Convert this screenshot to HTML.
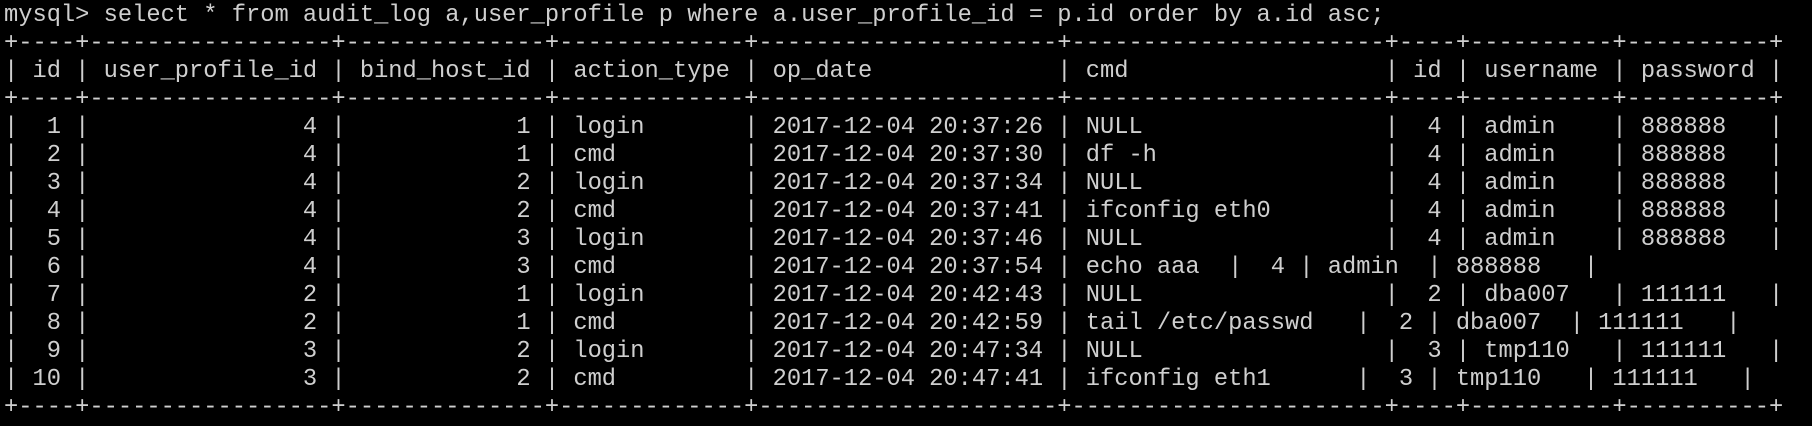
<!DOCTYPE html>
<html><head><meta charset="utf-8"><style>
html,body{margin:0;padding:0;background:#000;width:1812px;height:426px;overflow:hidden}
pre{margin:0;padding:2px 0 0 4px;font-family:"Liberation Mono",monospace;font-size:23.73px;line-height:28px;color:#cfcfcf;white-space:pre}
</style></head><body><pre>mysql&gt; select * from audit_log a,user_profile p where a.user_profile_id = p.id order by a.id asc;
+----+-----------------+--------------+-------------+---------------------+----------------------+----+----------+----------+
| id | user_profile_id | bind_host_id | action_type | op_date             | cmd                  | id | username | password |
+----+-----------------+--------------+-------------+---------------------+----------------------+----+----------+----------+
|  1 |               4 |            1 | login       | 2017-12-04 20:37:26 | NULL                 |  4 | admin    | 888888   |
|  2 |               4 |            1 | cmd         | 2017-12-04 20:37:30 | df -h                |  4 | admin    | 888888   |
|  3 |               4 |            2 | login       | 2017-12-04 20:37:34 | NULL                 |  4 | admin    | 888888   |
|  4 |               4 |            2 | cmd         | 2017-12-04 20:37:41 | ifconfig eth0        |  4 | admin    | 888888   |
|  5 |               4 |            3 | login       | 2017-12-04 20:37:46 | NULL                 |  4 | admin    | 888888   |
|  6 |               4 |            3 | cmd         | 2017-12-04 20:37:54 | echo aaa  |  4 | admin  | 888888   |
|  7 |               2 |            1 | login       | 2017-12-04 20:42:43 | NULL                 |  2 | dba007   | 111111   |
|  8 |               2 |            1 | cmd         | 2017-12-04 20:42:59 | tail /etc/passwd   |  2 | dba007  | 111111   |
|  9 |               3 |            2 | login       | 2017-12-04 20:47:34 | NULL                 |  3 | tmp110   | 111111   |
| 10 |               3 |            2 | cmd         | 2017-12-04 20:47:41 | ifconfig eth1      |  3 | tmp110   | 111111   |
+----+-----------------+--------------+-------------+---------------------+----------------------+----+----------+----------+</pre></body></html>
